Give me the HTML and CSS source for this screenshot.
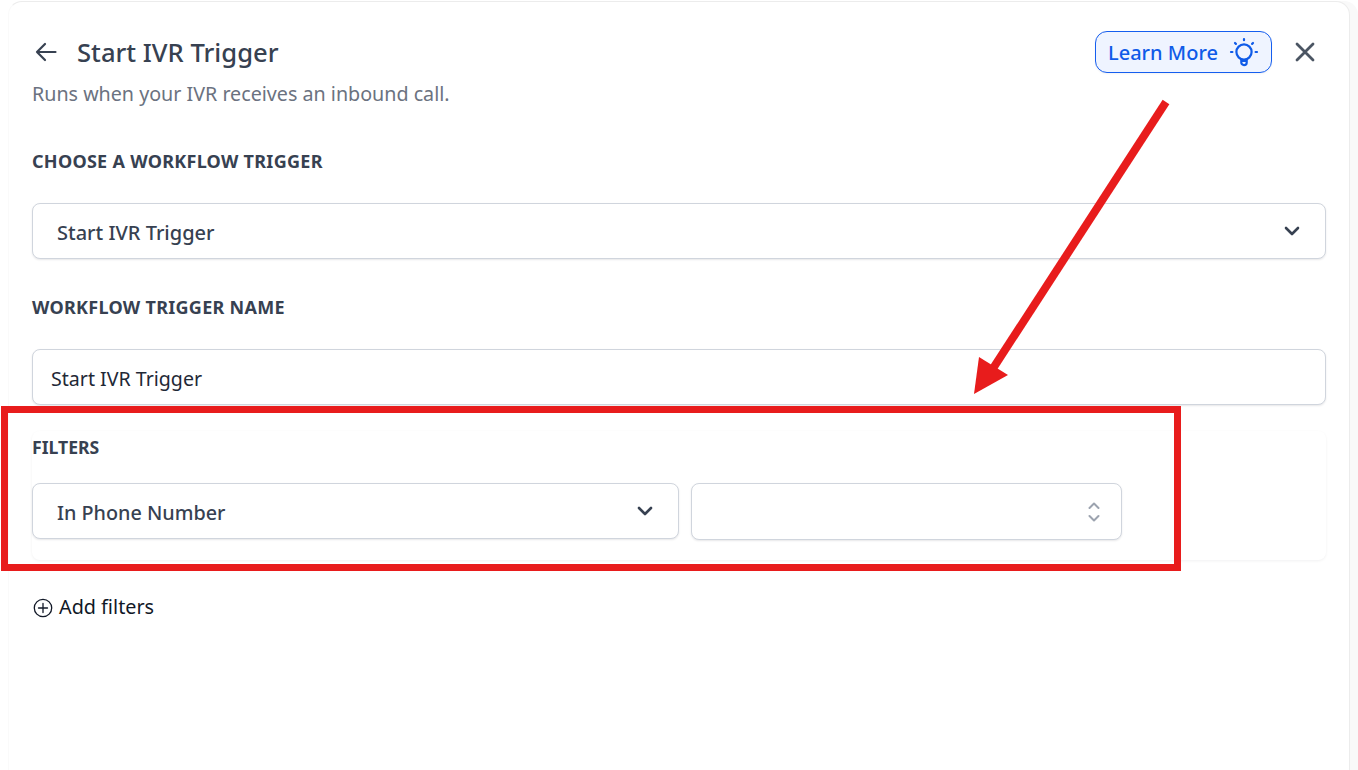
FILE: index.html
```html
<!DOCTYPE html>
<html lang="en">
<head>
<meta charset="utf-8">
<title>Start IVR Trigger</title>
<link rel="stylesheet" href="styles.css">
</head>
<body>
<main class="panel">
  <header class="head">
    <div class="title-row">
      <svg class="back" width="24" height="24" viewBox="0 0 24 24" fill="none" stroke="#374151" stroke-width="2.2" stroke-linecap="round" stroke-linejoin="round"><path d="M21.5 12H3M11 4l-8 8 8 8"/></svg>
      <h1 class="title">Start IVR Trigger</h1>
    </div>
    <div class="actions">
      <button class="learn">Learn More
        <svg width="30" height="30" viewBox="0 0 30 30" fill="none" stroke="#0f5be8" stroke-width="2.2" stroke-linecap="round" stroke-linejoin="round"><circle cx="15" cy="15" r="7.6"/><path d="M12.3 22v3.4a2.7 2.7 0 0 0 5.4 0V22M12.3 24h5.4M15 2v1.2M6 6l.9.9M24 6l-.9.9M2 15h1.4M28 15h-1.4"/></svg>
      </button>
      <svg class="close" width="24" height="24" viewBox="0 0 24 24" fill="none" stroke="#4b5563" stroke-width="2.8" stroke-linecap="round"><path d="M4 4l16 16M20 4L4 20"/></svg>
    </div>
  </header>
  <p class="sub">Runs when your IVR receives an inbound call.</p>

  <label class="label first">CHOOSE A WORKFLOW TRIGGER</label>
  <div class="field select">
    <span>Start IVR Trigger</span>
    <svg class="chev" width="16" height="10" viewBox="0 0 16 10" fill="none" stroke="#374151" stroke-width="2.6" stroke-linecap="round" stroke-linejoin="round"><path d="M2 2l6 6 6-6"/></svg>
  </div>

  <label class="label second">WORKFLOW TRIGGER NAME</label>
  <div class="field text"><span>Start IVR Trigger</span></div>

  <section class="filters">
    <label class="label third">FILTERS</label>
    <div class="filter-row">
      <div class="field select phone">
        <span>In Phone Number</span>
        <svg class="chev" width="16" height="10" viewBox="0 0 16 10" fill="none" stroke="#374151" stroke-width="2.6" stroke-linecap="round" stroke-linejoin="round"><path d="M2 2l6 6 6-6"/></svg>
      </div>
      <div class="field value">
        <svg width="14" height="24" viewBox="0 0 14 24" fill="none" stroke="#9ca3af" stroke-width="2" stroke-linecap="round" stroke-linejoin="round"><path d="M2.500 8l4.500-4.500L11.500 8M2.500 16l4.500 4.500 4.500-4.500"/></svg>
      </div>
    </div>
  </section>

  <div class="add">
    <svg class="add-icon" width="20" height="20" viewBox="0 0 20 20" fill="none" stroke="#111827" stroke-width="1.3" stroke-linecap="round"><circle cx="10" cy="10" r="8.700"/><path d="M10 5.500v9M5.500 10h9"/></svg>
    <span>Add filters</span>
  </div>
</main>

<div class="mark-box"></div>
<svg class="mark-arrow" width="1358" height="770" viewBox="0 0 1358 770">
  <path d="M1166 102L992 370" stroke="#e81c1c" stroke-width="8" fill="none"/>
  <path d="M979 357L974 394L1008 375Z" fill="#e81c1c"/>
</svg>
</body>
</html>
```
FILE: styles.css
```css
* { box-sizing: border-box; }
html, body { margin: 0; height: 100%; overflow: hidden; }
body {
  background: #fff;
  font-family: "Noto Sans", "Open Sans", sans-serif;
  color: #374151;
  padding: 1px 8px 0;
}
.panel {
  background: #fff;
  height: 790px;
  border: 1px solid #ececec;
  border-left-color: #fafafa;
  border-radius: 14px;
  padding: 29px 23px 0;
  box-shadow: 8px 0 0 #f9f9f9;
}
.head { display: flex; justify-content: space-between; align-items: flex-start; height: 43px; }
.title-row { display: flex; align-items: center; height: 43px; }
.back { margin-right: 19px; margin-left: 2px; margin-top: -2px; }
.title { margin: 0; font-size: 25.6px; font-weight: 500; line-height: 44px; color: #374151; }
.actions { display: flex; align-items: center; gap: 21px; padding-right: 9px; }
.learn {
  display: flex; align-items: center; justify-content: space-between;
  width: 177px; height: 42px; padding: 0 12px 0 12px;
  background: #eff4ff; border: 1px solid #155eef; border-radius: 12px;
  color: #0f5be8; font: 500 20px "Noto Sans", sans-serif;
  box-shadow: 0 1px 2px rgba(16,24,40,.05);
}
.close { display: block; }
.sub { margin: 6px 0 0; font-size: 19.7px; line-height: 28px; color: #6b7280; height: 28px; }
.label { display: block; font-size: 18px; font-weight: 700; line-height: 24px; color: #374151; letter-spacing: .28px; }
.label.first { margin-top: 41px; margin-bottom: 30px; }
.label.second { margin-top: 36px; margin-bottom: 30px; }
.label.third { margin-bottom: 24px; font-size: 17.6px; letter-spacing: 0; }
.field {
  background: #fff; border: 1px solid #d0d5dd; border-radius: 8px;
  box-shadow: 0 1px 2px rgba(16,24,40,.1);
  display: flex; align-items: center; justify-content: space-between;
  font-size: 20px; height: 56px;
}
.select { padding: 0 25px 0 24px; font-weight: 500; }
.select span, .text span { position: relative; top: 1px; }
.text { padding: 0 18px; color: #1f2937; font-size: 19.6px; }
.filters {
  margin-top: 26px; height: 129px; padding-top: 4px;
  border-radius: 8px; box-shadow: 0 1px 3px rgba(16,24,40,.06);
}
.filter-row { display: flex; gap: 12px; align-items: flex-start; }
.phone { width: 647px; height: 56px; font-size: 19.8px; }
.value { width: 431px; height: 57px; padding: 0 20px 0 0; justify-content: flex-end; }
.add { display: flex; align-items: center; gap: 7px; margin-top: 33px; font-size: 19.8px; color: #111827; }
.add-icon { position: relative; top: 1px; left: 1px; }
.mark-box {
  position: absolute; left: 1px; top: 406px; width: 1180px; height: 165px;
  border: 7px solid #e81c1c;
}
.mark-arrow { position: absolute; left: 0; top: 0; pointer-events: none; }
```
